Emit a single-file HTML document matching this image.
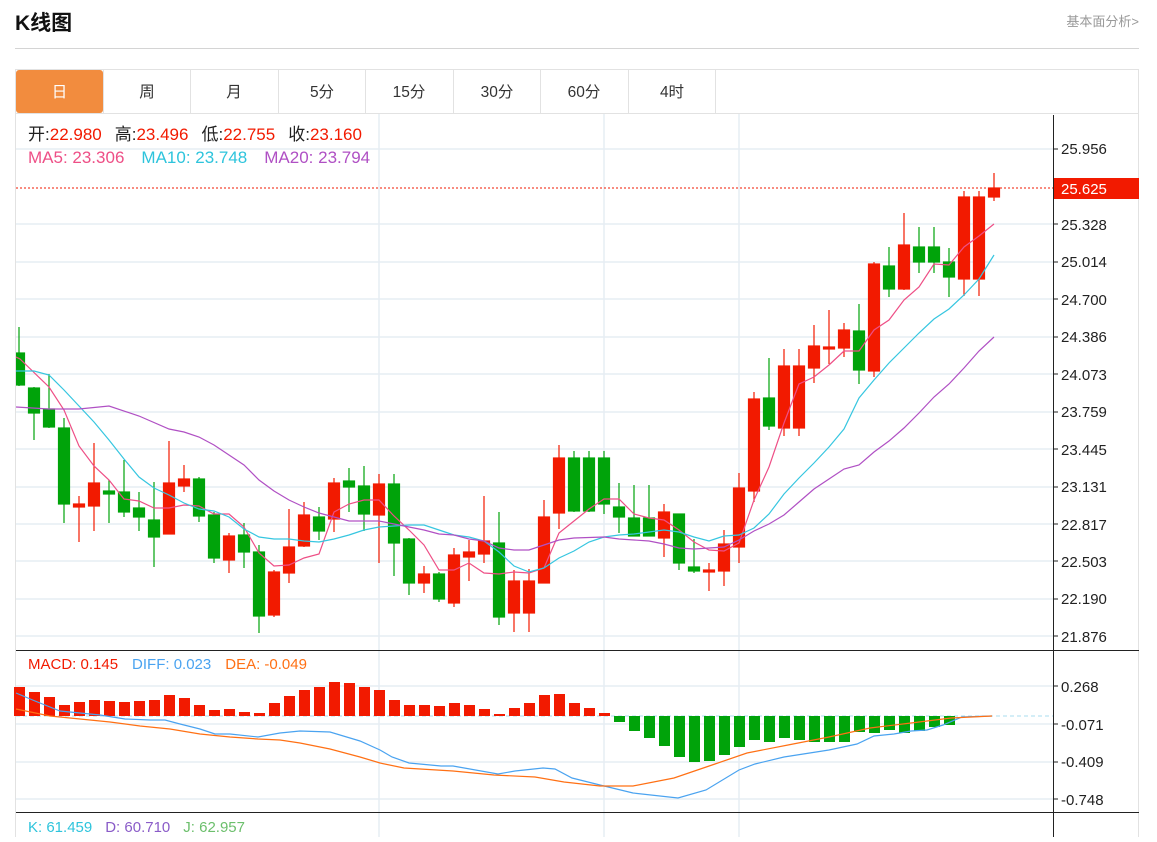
<!DOCTYPE html>
<html><head><meta charset="utf-8"><style>
body{margin:0;background:#fff;width:1157px;height:837px;overflow:hidden;font-family:"Liberation Sans","Noto Sans CJK SC",sans-serif;}
svg text{font-family:"Liberation Sans","Noto Sans CJK SC",sans-serif;}
</style></head><body>
<svg width="1157" height="837" viewBox="0 0 1157 837" xmlns="http://www.w3.org/2000/svg">
<defs><clipPath id="pc"><rect x="16" y="114" width="1037" height="536"/></clipPath></defs>
<text x="15" y="30" font-size="21" font-weight="bold" fill="#111">K线图</text>
<text x="1139" y="26" font-size="13" fill="#999" text-anchor="end">基本面分析&gt;</text>
<line x1="15" y1="48.5" x2="1139" y2="48.5" stroke="#d4d4d4"/>
<rect x="15.5" y="69.5" width="1123" height="780" fill="none" stroke="#e2e2e2"/>
<line x1="15" y1="113.5" x2="1139" y2="113.5" stroke="#e2e2e2"/>
<g stroke="#e2e2e2"><line x1="103.5" y1="70" x2="103.5" y2="113"/><line x1="190.5" y1="70" x2="190.5" y2="113"/><line x1="278.5" y1="70" x2="278.5" y2="113"/><line x1="365.5" y1="70" x2="365.5" y2="113"/><line x1="453.5" y1="70" x2="453.5" y2="113"/><line x1="540.5" y1="70" x2="540.5" y2="113"/><line x1="628.5" y1="70" x2="628.5" y2="113"/><line x1="715.5" y1="70" x2="715.5" y2="113"/></g>
<rect x="16" y="70" width="87" height="43" rx="3" fill="#f28c3e"/>
<g font-size="15.5" text-anchor="middle" fill="#333">
<text x="59.5" y="97" fill="#fff">日</text><text x="147" y="97">周</text><text x="234" y="97">月</text><text x="322" y="97">5分</text><text x="409" y="97">15分</text><text x="497" y="97">30分</text><text x="584" y="97">60分</text><text x="672" y="97">4时</text></g>
<g stroke="#e6edf3" stroke-width="1.5">
<line x1="16" y1="149" x2="1053" y2="149"/><line x1="16" y1="224" x2="1053" y2="224"/><line x1="16" y1="262" x2="1053" y2="262"/><line x1="16" y1="299" x2="1053" y2="299"/><line x1="16" y1="337" x2="1053" y2="337"/><line x1="16" y1="374" x2="1053" y2="374"/><line x1="16" y1="412" x2="1053" y2="412"/><line x1="16" y1="449" x2="1053" y2="449"/><line x1="16" y1="487" x2="1053" y2="487"/><line x1="16" y1="524" x2="1053" y2="524"/><line x1="16" y1="561" x2="1053" y2="561"/><line x1="16" y1="599" x2="1053" y2="599"/><line x1="16" y1="636" x2="1053" y2="636"/>
<line x1="16" y1="686" x2="1053" y2="686"/><line x1="16" y1="724" x2="1053" y2="724"/><line x1="16" y1="762" x2="1053" y2="762"/><line x1="16" y1="799" x2="1053" y2="799"/>
<line x1="379" y1="114" x2="379" y2="837"/><line x1="604" y1="114" x2="604" y2="837"/><line x1="739" y1="114" x2="739" y2="837"/>
</g>
<line x1="16" y1="188" x2="1053" y2="188" stroke="#f01800" stroke-dasharray="2,2"/>
<g clip-path="url(#pc)">
<g stroke="#f21a00" fill="#f21a00" stroke-width="1.2">
<path d="M79 496V542M94 443V531M169 441V534M184 465V492M229 533V573M274 570V617M289 509V583M304 502V547M334 478V532M379 474V563M424 566V593M454 548V607M469 540V581M484 496V563M514 570V632M529 569V632M544 500V583M559 445V529M664 504V557M709 563V591M724 530V586M739 473V563M754 392V502M784 349V436M799 349V436M814 325V383M829 310V364M844 323V357M874 262V377M904 213V290M964 191V296M979 191V296M994 173V201"/>
<rect x="73.5" y="504" width="11" height="3"/><rect x="88.5" y="483" width="11" height="23"/><rect x="163.5" y="483" width="11" height="51"/><rect x="178.5" y="479" width="11" height="7"/><rect x="223.5" y="536" width="11" height="24"/><rect x="268.5" y="572" width="11" height="43"/><rect x="283.5" y="547" width="11" height="26"/><rect x="298.5" y="515" width="11" height="31"/><rect x="328.5" y="483" width="11" height="36"/><rect x="373.5" y="484" width="11" height="31"/><rect x="418.5" y="574" width="11" height="9"/><rect x="448.5" y="555" width="11" height="48"/><rect x="463.5" y="552" width="11" height="5"/><rect x="478.5" y="541" width="11" height="13"/><rect x="508.5" y="581" width="11" height="32"/><rect x="523.5" y="581" width="11" height="32"/><rect x="538.5" y="517" width="11" height="66"/><rect x="553.5" y="458" width="11" height="55"/><rect x="658.5" y="512" width="11" height="26"/><rect x="703.5" y="570" width="11" height="2"/><rect x="718.5" y="544" width="11" height="27"/><rect x="733.5" y="488" width="11" height="59"/><rect x="748.5" y="399" width="11" height="92"/><rect x="778.5" y="366" width="11" height="62"/><rect x="793.5" y="366" width="11" height="62"/><rect x="808.5" y="346" width="11" height="22"/><rect x="823.5" y="347" width="11" height="2"/><rect x="838.5" y="330" width="11" height="18"/><rect x="868.5" y="264" width="11" height="107"/><rect x="898.5" y="245" width="11" height="44"/><rect x="958.5" y="197" width="11" height="82"/><rect x="973.5" y="197" width="11" height="82"/><rect x="988.5" y="188" width="11" height="9"/>
</g>
<g stroke="#00a30a" fill="#00a30a" stroke-width="1.2">
<path d="M19 327V386M34 387V440M49 374V428M64 418V523M109 480V523M124 460V517M139 492V531M154 482V567M199 477V522M214 512V563M244 523V568M259 545V633M319 507V540M349 468V512M364 466V531M394 474V576M409 538V595M439 572V602M499 512V625M574 451V512M589 451V512M604 451V514M619 483V533M634 485V536M649 485V536M679 514V570M694 539V573M769 358V430M859 304V384M889 247V297M919 227V273M934 227V273M949 248V297"/>
<rect x="13.5" y="353" width="11" height="32"/><rect x="28.5" y="388" width="11" height="25"/><rect x="43.5" y="409" width="11" height="18"/><rect x="58.5" y="428" width="11" height="76"/><rect x="103.5" y="491" width="11" height="3"/><rect x="118.5" y="492" width="11" height="20"/><rect x="133.5" y="508" width="11" height="9"/><rect x="148.5" y="520" width="11" height="17"/><rect x="193.5" y="479" width="11" height="37"/><rect x="208.5" y="515" width="11" height="43"/><rect x="238.5" y="535" width="11" height="17"/><rect x="253.5" y="552" width="11" height="64"/><rect x="313.5" y="517" width="11" height="14"/><rect x="343.5" y="481" width="11" height="6"/><rect x="358.5" y="486" width="11" height="28"/><rect x="388.5" y="484" width="11" height="59"/><rect x="403.5" y="539" width="11" height="44"/><rect x="433.5" y="574" width="11" height="25"/><rect x="493.5" y="543" width="11" height="74"/><rect x="568.5" y="458" width="11" height="53"/><rect x="583.5" y="458" width="11" height="53"/><rect x="598.5" y="458" width="11" height="46"/><rect x="613.5" y="507" width="11" height="10"/><rect x="628.5" y="518" width="11" height="18"/><rect x="643.5" y="518" width="11" height="18"/><rect x="673.5" y="514" width="11" height="49"/><rect x="688.5" y="567" width="11" height="4"/><rect x="763.5" y="398" width="11" height="28"/><rect x="853.5" y="331" width="11" height="39"/><rect x="883.5" y="266" width="11" height="23"/><rect x="913.5" y="247" width="11" height="15"/><rect x="928.5" y="247" width="11" height="15"/><rect x="943.5" y="262" width="11" height="15"/>
</g>
<g fill="none" stroke-width="1.2">
<polyline stroke="#ee4f86" points="16,357 20,359 49,387 64,410 79,446 94,466 109,480 124,499 139,501 154,508 169,508 184,505 199,506 214,514 229,514 244,527 259,553 274,566 289,565 304,558 319,554 334,512 349,504 364,500 379,500 394,516 409,530 424,545 439,570 454,570 469,563 484,573 499,574 514,572 529,573 544,568 559,533 574,521 589,509 604,499 619,499 634,514 649,518 664,520 679,530 694,542 709,550 724,551 739,543 754,500 769,467 784,423 799,384 814,377 829,365 844,351 859,351 874,330 889,320 904,300 919,287 934,264 949,265 964,247 979,236 994,224"/>
<polyline stroke="#36c6e0" points="16,371 34,371 49,375 64,390 79,406 94,422 109,440 124,459 139,477 154,488 169,495 184,503 199,509 214,511 229,517 244,529 259,537 274,539 289,539 304,541 319,542 334,539 349,535 364,530 379,527 394,526 409,525 424,525 439,530 454,535 469,537 484,541 499,552 514,566 529,572 544,568 559,558 574,551 589,542 604,537 619,535 634,534 649,532 664,530 679,532 694,537 709,541 724,536 739,535 754,528 769,514 784,494 799,478 814,463 829,447 844,429 859,398 874,380 889,363 904,348 919,333 934,319 949,309 964,295 979,279 994,255"/>
<polyline stroke="#b050c4" points="16,407 49,409 79,409 109,406 139,416 169,429 184,432 199,437 214,445 229,455 244,465 259,480 274,491 289,500 304,507 319,513 334,517 349,521 379,521 394,524 409,527 424,530 439,534 454,535 469,539 484,541 499,548 514,550 529,550 544,545 559,540 574,538 604,537 619,539 649,541 664,544 679,548 694,549 724,547 739,540 754,531 769,524 784,515 799,502 814,489 829,479 844,469 859,465 874,452 889,441 904,428 919,413 934,397 949,384 964,368 979,351 994,337"/>
</g>
</g>
<text x="28" y="140" font-size="17"><tspan fill="#222">开:</tspan><tspan fill="#f21a00">22.980</tspan><tspan dx="13" fill="#222">高:</tspan><tspan fill="#f21a00">23.496</tspan><tspan dx="13" fill="#222">低:</tspan><tspan fill="#f21a00">22.755</tspan><tspan dx="13" fill="#222">收:</tspan><tspan fill="#f21a00">23.160</tspan></text>
<text x="28" y="163" font-size="17"><tspan fill="#ee4f86">MA5: 23.306</tspan><tspan dx="17" fill="#2ec4dc">MA10: 23.748</tspan><tspan dx="17" fill="#b050c4">MA20: 23.794</tspan></text>
<line x1="1053.5" y1="115" x2="1053.5" y2="837" stroke="#222"/>
<line x1="16" y1="650.5" x2="1139" y2="650.5" stroke="#222"/>
<line x1="16" y1="812.5" x2="1139" y2="812.5" stroke="#222"/>
<g stroke="#222"><path d="M1053 149h5M1053 188h5M1053 224h5M1053 262h5M1053 299h5M1053 337h5M1053 374h5M1053 412h5M1053 449h5M1053 487h5M1053 524h5M1053 561h5M1053 599h5M1053 636h5M1053 686h5M1053 724h5M1053 762h5M1053 799h5"/></g>
<rect x="1054" y="178" width="85" height="21" fill="#f21a00"/>
<g font-size="15" fill="#222">
<text x="1061" y="154">25.956</text><text x="1061" y="194" fill="#fff">25.625</text><text x="1061" y="230">25.328</text><text x="1061" y="267">25.014</text><text x="1061" y="305">24.700</text><text x="1061" y="342">24.386</text><text x="1061" y="380">24.073</text><text x="1061" y="417">23.759</text><text x="1061" y="455">23.445</text><text x="1061" y="492">23.131</text><text x="1061" y="530">22.817</text><text x="1061" y="567">22.503</text><text x="1061" y="604">22.190</text><text x="1061" y="642">21.876</text>
<text x="1061" y="692">0.268</text><text x="1061" y="730">-0.071</text><text x="1061" y="767">-0.409</text><text x="1061" y="805">-0.748</text></g>
<line x1="16" y1="716" x2="1053" y2="716" stroke="#a8dcef" stroke-dasharray="4,3"/>
<g fill="#f21a00">
<rect x="14" y="687" width="11" height="29"/><rect x="29" y="692" width="11" height="24"/><rect x="44" y="697" width="11" height="19"/><rect x="59" y="705" width="11" height="11"/><rect x="74" y="702" width="11" height="14"/><rect x="89" y="700" width="11" height="16"/><rect x="104" y="701" width="11" height="15"/><rect x="119" y="702" width="11" height="14"/><rect x="134" y="701" width="11" height="15"/><rect x="149" y="700" width="11" height="16"/><rect x="164" y="695" width="11" height="21"/><rect x="179" y="698" width="11" height="18"/><rect x="194" y="705" width="11" height="11"/><rect x="209" y="710" width="11" height="6"/><rect x="224" y="709" width="11" height="7"/><rect x="239" y="712" width="11" height="4"/><rect x="254" y="713" width="11" height="3"/><rect x="269" y="703" width="11" height="13"/><rect x="284" y="696" width="11" height="20"/><rect x="299" y="690" width="11" height="26"/><rect x="314" y="687" width="11" height="29"/><rect x="329" y="682" width="11" height="34"/><rect x="344" y="683" width="11" height="33"/><rect x="359" y="687" width="11" height="29"/><rect x="374" y="690" width="11" height="26"/><rect x="389" y="700" width="11" height="16"/><rect x="404" y="705" width="11" height="11"/><rect x="419" y="705" width="11" height="11"/><rect x="434" y="706" width="11" height="10"/><rect x="449" y="703" width="11" height="13"/><rect x="464" y="705" width="11" height="11"/><rect x="479" y="709" width="11" height="7"/><rect x="494" y="714" width="11" height="2"/><rect x="509" y="708" width="11" height="8"/><rect x="524" y="703" width="11" height="13"/><rect x="539" y="695" width="11" height="21"/><rect x="554" y="694" width="11" height="22"/><rect x="569" y="703" width="11" height="13"/><rect x="584" y="708" width="11" height="8"/><rect x="599" y="713" width="11" height="3"/>
</g>
<g fill="#00a30a">
<rect x="614" y="716" width="11" height="6"/><rect x="629" y="716" width="11" height="15"/><rect x="644" y="716" width="11" height="22"/><rect x="659" y="716" width="11" height="30"/><rect x="674" y="716" width="11" height="41"/><rect x="689" y="716" width="11" height="46"/><rect x="704" y="716" width="11" height="45"/><rect x="719" y="716" width="11" height="39"/><rect x="734" y="716" width="11" height="31"/><rect x="749" y="716" width="11" height="24"/><rect x="764" y="716" width="11" height="26"/><rect x="779" y="716" width="11" height="22"/><rect x="794" y="716" width="11" height="24"/><rect x="809" y="716" width="11" height="26"/><rect x="824" y="716" width="11" height="26"/><rect x="839" y="716" width="11" height="26"/><rect x="854" y="716" width="11" height="16"/><rect x="869" y="716" width="11" height="17"/><rect x="884" y="716" width="11" height="14"/><rect x="899" y="716" width="11" height="17"/><rect x="914" y="716" width="11" height="15"/><rect x="929" y="716" width="11" height="11"/><rect x="944" y="716" width="11" height="9"/>
</g>
<g fill="none" stroke-width="1.2">
<polyline stroke="#4aa3f0" points="16,693 35,701 60,711 80,713 100,715 125,719 150,720 165,720 180,724 200,729 215,734 230,734 258,737 280,733 300,731 330,732 360,741 380,750 392,757 409,763 441,766 453,766 498,774 515,771 543,768 555,769 572,778 600,785 633,793 678,798 706,790 739,770 755,764 784,757 829,750 857,744 874,736 894,734 911,731 927,730 943,725 962,717 992,716"/>
<polyline stroke="#ff7014" points="16,709 50,716 80,719 110,722 140,726 170,729 200,734 230,737 258,739 280,740 300,743 330,749 360,757 380,763 404,768 453,771 494,775 535,777 564,782 600,786 633,786 674,778 715,764 747,753 788,745 829,737 870,728 911,723 951,718 992,716"/>
</g>
<text x="28" y="669" font-size="15"><tspan fill="#f21a00">MACD: 0.145</tspan><tspan dx="14" fill="#4aa3f0">DIFF: 0.023</tspan><tspan dx="14" fill="#ff7014">DEA: -0.049</tspan></text>
<text x="28" y="832" font-size="15"><tspan fill="#2ec4dc">K: 61.459</tspan><tspan dx="13" fill="#8a5cc8">D: 60.710</tspan><tspan dx="13" fill="#6cbf6c">J: 62.957</tspan></text>
</svg>
</body></html>
